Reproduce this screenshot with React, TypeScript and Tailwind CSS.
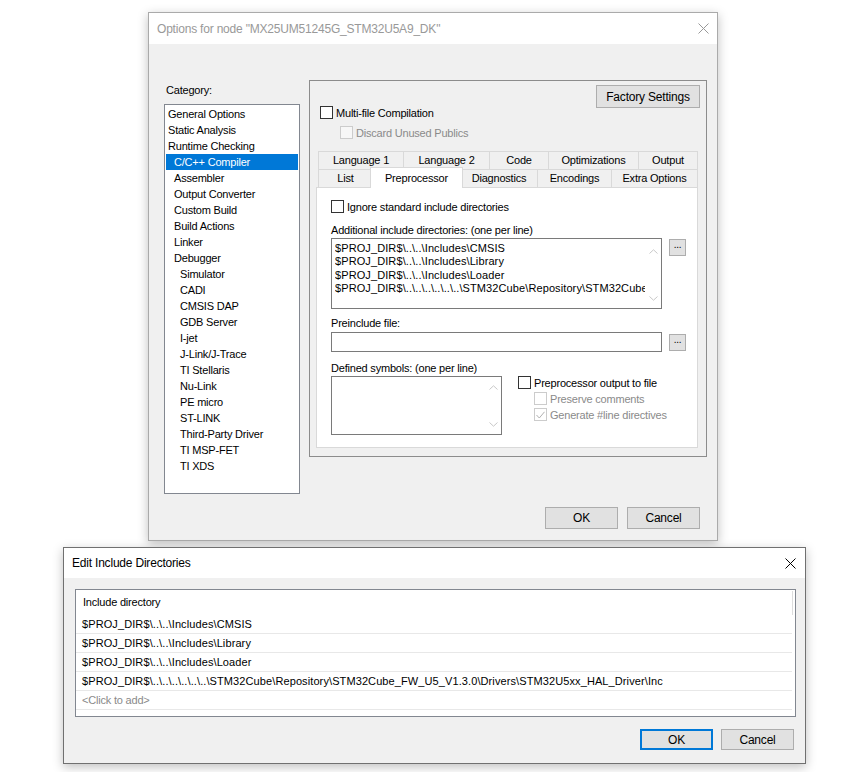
import type { ReactNode } from "react";

const font = "font-['Liberation_Sans',Arial,sans-serif]";

const categories: [string, number][] = [
  ["General Options", 0],
  ["Static Analysis", 0],
  ["Runtime Checking", 0],
  ["C/C++ Compiler", 1],
  ["Assembler", 1],
  ["Output Converter", 1],
  ["Custom Build", 1],
  ["Build Actions", 1],
  ["Linker", 1],
  ["Debugger", 1],
  ["Simulator", 2],
  ["CADI", 2],
  ["CMSIS DAP", 2],
  ["GDB Server", 2],
  ["I-jet", 2],
  ["J-Link/J-Trace", 2],
  ["TI Stellaris", 2],
  ["Nu-Link", 2],
  ["PE micro", 2],
  ["ST-LINK", 2],
  ["Third-Party Driver", 2],
  ["TI MSP-FET", 2],
  ["TI XDS", 2],
];

const indent = ["pl-[2px]", "pl-[8px]", "pl-[14px]"];

const includeDirs = [
  "$PROJ_DIR$\\..\\..\\Includes\\CMSIS",
  "$PROJ_DIR$\\..\\..\\Includes\\Library",
  "$PROJ_DIR$\\..\\..\\Includes\\Loader",
  "$PROJ_DIR$\\..\\..\\..\\..\\..\\..\\STM32Cube\\Repository\\STM32Cube_FW_U5_V1.3.0\\Drivers\\STM32U5xx_HAL_Driver\\Inc",
];

function CloseX({ color }: { color: string }) {
  return (
    <svg width="11" height="11" viewBox="0 0 11 11" fill="none" stroke={color} strokeWidth="1">
      <path d="M0.5 0.5 L10.5 10.5 M10.5 0.5 L0.5 10.5" />
    </svg>
  );
}

function Check({
  label,
  disabled,
  checked,
  bg = "bg-white",
}: {
  label: string;
  disabled?: boolean;
  checked?: boolean;
  bg?: string;
}) {
  return (
    <div className="flex h-[13px] items-center">
      <span
        className={`flex h-[13px] w-[13px] shrink-0 items-center justify-center border ${
          disabled ? "border-[#cccccc]" : "border-[#333333]"
        } ${bg}`}
      >
        {checked ? (
          <svg width="9" height="8" viewBox="0 0 9 8" fill="none" stroke="#b0b0b0" strokeWidth="1">
            <path d="M0.5 4 L3.3 7 L8.5 0.8" />
          </svg>
        ) : null}
      </span>
      <span className={`ml-[3px] leading-[14px] ${disabled ? "text-[#8a8a8a]" : "text-black"}`}>{label}</span>
    </div>
  );
}

function Chevrons({ top, bottom }: { top: string; bottom: string }) {
  return (
    <div className="flex w-[16px] shrink-0 flex-col items-center">
      <svg className={top} width="9" height="5" viewBox="0 0 9 5" fill="none" stroke="#c8c8c8" strokeWidth="1">
        <path d="M0.5 4.5 L4.5 0.8 L8.5 4.5" />
      </svg>
      <div className="flex-1" />
      <svg className={bottom} width="9" height="5" viewBox="0 0 9 5" fill="none" stroke="#c8c8c8" strokeWidth="1">
        <path d="M0.5 0.5 L4.5 4.2 L8.5 0.5" />
      </svg>
    </div>
  );
}

function Dots() {
  return (
    <div className="flex h-[17px] w-[17px] items-center justify-center border border-[#adadad] bg-[#e1e1e1] pb-[5px] text-[10px] leading-none">
      ...
    </div>
  );
}

function WinButton({ children, focused, h = "h-[22px]" }: { children: ReactNode; focused?: boolean; h?: string }) {
  return (
    <div
      className={`flex w-[73px] ${h} items-center justify-center bg-[#e1e1e1] text-[12px] ${
        focused ? "border-2 border-[#0078d7]" : "border border-[#adadad]"
      }`}
    >
      {children}
    </div>
  );
}

function Tab({ label, w, first }: { label: string; w: string; first?: boolean }) {
  return (
    <div
      className={`flex h-[18px] ${w} items-center justify-center border border-b-0 border-[#d9d9d9] bg-[#f0f0f0] ${
        first ? "" : "-ml-px"
      }`}
    >
      {label}
    </div>
  );
}

function OptionsDialog() {
  return (
    <div className="absolute left-[148px] top-[12px] flex h-[529px] w-[570px] flex-col border border-[#aaaaaa] bg-[#f0f0f0] shadow-[0_3px_10px_rgba(0,0,0,0.25)]">
      <div className="flex h-[31px] items-center justify-between bg-white pl-[8px] pr-[8px]">
        <span className="text-[12px] text-[#999999]">Options for node "MX25UM51245G_STM32U5A9_DK"</span>
        <CloseX color="#999999" />
      </div>
      <div className="flex pl-[15px] pt-[36px]">
        <div className="flex w-[136px] flex-col">
          <div className="mt-[3px] pl-[2px] leading-[14px]">Category:</div>
          <div className="mt-[7px] flex h-[390px] flex-col border border-[#828790] bg-white px-[1px] pt-[1px]">
            {categories.map(([name, level]) => (
              <div
                key={name}
                className={`flex h-[16px] items-center ${indent[level]} ${
                  name === "C/C++ Compiler" ? "bg-[#0078d7] text-white" : "text-black"
                }`}
              >
                {name}
              </div>
            ))}
          </div>
        </div>
        <div className="ml-[9px] flex h-[377px] w-[398px] flex-col border border-[#8c8c8c]">
          <div className="flex justify-end pr-[6px] pt-[4px]">
            <div className="flex h-[23px] w-[104px] items-center justify-center border border-[#adadad] bg-[#e1e1e1] text-[12px]">
              Factory Settings
            </div>
          </div>
          <div className="-mt-[2px] pl-[10px]">
            <Check label="Multi-file Compilation" />
          </div>
          <div className="mt-[7px] pl-[30px]">
            <Check label="Discard Unused Publics" disabled bg="bg-[#f7f7f7]" />
          </div>
          <div className="mt-[12px] flex pl-[8px]">
            <Tab first label="Language 1" w="w-[86px]" />
            <Tab label="Language 2" w="w-[87px]" />
            <Tab label="Code" w="w-[60px]" />
            <Tab label="Optimizations" w="w-[91px]" />
            <Tab label="Output" w="w-[60px]" />
          </div>
          <div className="flex h-[18px] items-end pl-[8px]">
            <Tab first label="List" w="w-[55px]" />
            <div className="relative z-10 -mb-px -ml-[3px] -mr-[2px] flex h-[21px] w-[93px] items-start justify-center border border-b-0 border-[#d9d9d9] bg-white pt-[2px]">
              Preprocessor
            </div>
            <Tab label="Diagnostics" w="w-[78px]" />
            <Tab label="Encodings" w="w-[75px]" />
            <Tab label="Extra Options" w="w-[87px]" />
          </div>
          <div className="ml-[6px] flex h-[261px] w-[382px] flex-col border border-[#d9d9d9] bg-white pl-[14px] pt-[12px]">
            <Check label="Ignore standard include directories" />
            <div className="mt-[10px] leading-[14px]">Additional include directories: (one per line)</div>
            <div className="mt-[1px] flex items-start">
              <div className="flex h-[71px] w-[331px] border border-[#7a7a7a] bg-white pl-[3px] pt-[3px]">
                <div className="min-w-0 flex-1 overflow-hidden whitespace-nowrap leading-[13.4px] tracking-[0.1px]">
                  {includeDirs.map((d) => (
                    <div key={d}>{d}</div>
                  ))}
                </div>
                <Chevrons top="mt-[7px]" bottom="mb-[7px]" />
              </div>
              <div className="ml-[7px] mt-[1px]">
                <Dots />
              </div>
            </div>
            <div className="mt-[7px] leading-[14px]">Preinclude file:</div>
            <div className="mt-[2px] flex items-start">
              <div className="h-[20px] w-[331px] border border-[#7a7a7a] bg-white" />
              <div className="ml-[7px] mt-[2px]">
                <Dots />
              </div>
            </div>
            <div className="mt-[9px] leading-[14px]">Defined symbols: (one per line)</div>
            <div className="mt-[1px] flex items-start">
              <div className="flex h-[59px] w-[171px] justify-end border border-[#7a7a7a] bg-white">
                <Chevrons top="mt-[8px]" bottom="mb-[7px]" />
              </div>
              <div className="ml-[16px] flex flex-col">
                <Check label="Preprocessor output to file" />
                <div className="mt-[3px] flex flex-col gap-[3px] pl-[16px]">
                  <Check label="Preserve comments" disabled />
                  <Check label="Generate #line directives" disabled checked />
                </div>
              </div>
            </div>
          </div>
        </div>
      </div>
      <div className="mt-[13px] flex justify-end gap-[9px] pr-[17px]">
        <WinButton>OK</WinButton>
        <WinButton>Cancel</WinButton>
      </div>
    </div>
  );
}

function IncludeDialog() {
  return (
    <div className="absolute left-[63px] top-[547px] flex h-[217px] w-[743px] flex-col border border-[#707070] bg-[#f0f0f0] shadow-[0_3px_10px_rgba(0,0,0,0.25)]">
      <div className="flex h-[30px] items-center justify-between bg-white pl-[8px] pr-[9px]">
        <span className="text-[12px] text-black">Edit Include Directories</span>
        <CloseX color="#000000" />
      </div>
      <div className="pl-[11px] pt-[11px]">
        <div className="relative flex h-[128px] w-[721px] flex-col border border-[#828790] bg-white">
          <div className="absolute right-[2px] top-[1px] h-[24px] w-[1px] bg-[#dddddd]" />
          <div className="flex h-[25px] items-center pl-[7px]">Include directory</div>
          {includeDirs.map((d) => (
            <div
              key={d}
              className="mr-[3px] flex h-[19px] items-center border-b border-[#e8e8e8] pl-[6px] tracking-[0.1px]"
            >
              {d}
            </div>
          ))}
          <div className="mr-[3px] flex h-[19px] items-center border-b border-[#e8e8e8] pl-[6px] text-[#8a8a8a]">
            &lt;Click to add&gt;
          </div>
        </div>
      </div>
      <div className="mt-[12px] flex justify-end gap-[8px] pr-[11px]">
        <WinButton focused h="h-[21px]">
          OK
        </WinButton>
        <WinButton h="h-[21px]">Cancel</WinButton>
      </div>
    </div>
  );
}

export default function App() {
  return (
    <div className={`relative h-[772px] w-[849px] overflow-hidden bg-white text-[11px] tracking-[-0.2px] text-black ${font}`}>
      <OptionsDialog />
      <IncludeDialog />
    </div>
  );
}
